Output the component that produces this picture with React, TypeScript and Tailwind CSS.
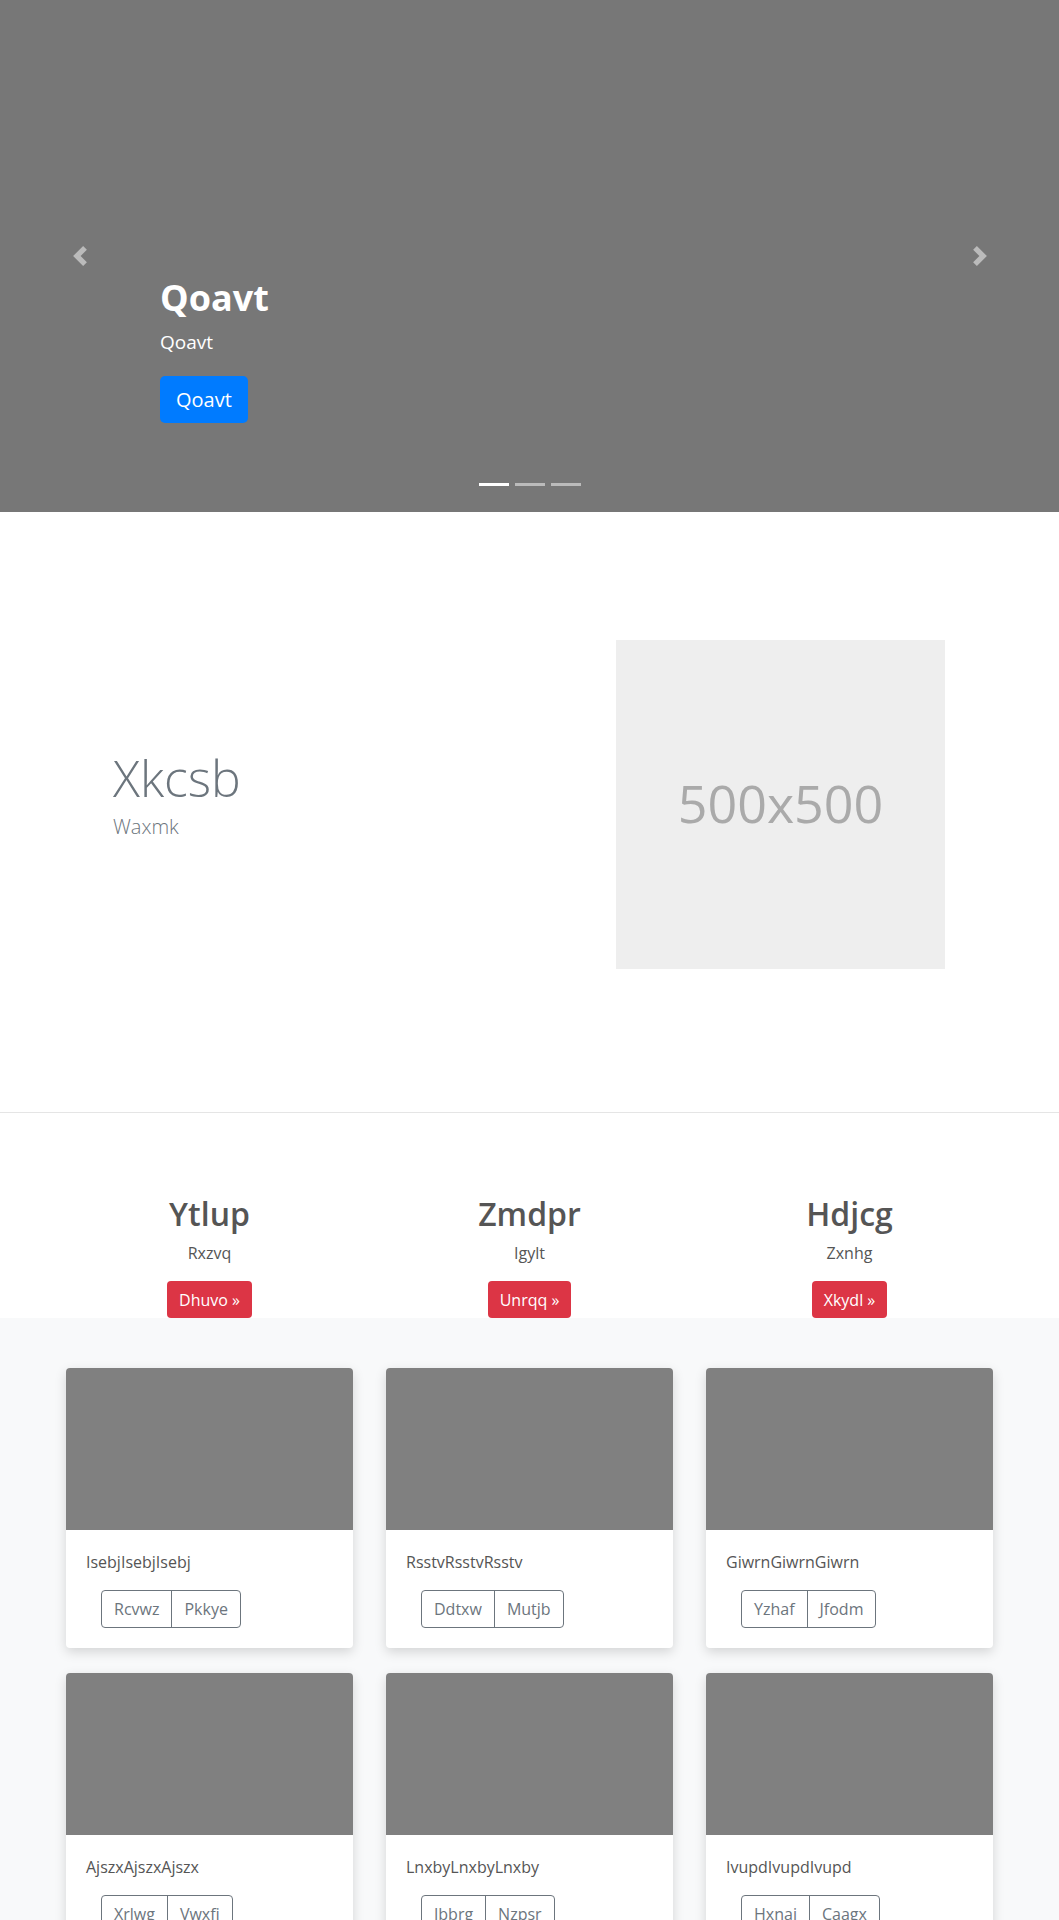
const font = { fontFamily: '"Open Sans", "Noto Sans", sans-serif' };

const features = [
  { title: 'Ytlup', text: 'Rxzvq', cta: 'Dhuvo' },
  { title: 'Zmdpr', text: 'Igylt', cta: 'Unrqq' },
  { title: 'Hdjcg', text: 'Zxnhg', cta: 'Xkydl' },
];

const cards = [
  { text: 'IsebjIsebjIsebj', a: 'Rcvwz', b: 'Pkkye' },
  { text: 'RsstvRsstvRsstv', a: 'Ddtxw', b: 'Mutjb' },
  { text: 'GiwrnGiwrnGiwrn', a: 'Yzhaf', b: 'Jfodm' },
  { text: 'AjszxAjszxAjszx', a: 'Xrlwg', b: 'Vwxfi' },
  { text: 'LnxbyLnxbyLnxby', a: 'Jbbrg', b: 'Nzpsr' },
  { text: 'IvupdIvupdIvupd', a: 'Hxnaj', b: 'Caagx' },
];

// bootstrap-style carousel arrow
const Arrow = ({ dir }: { dir: 'prev' | 'next' }) => (
  <svg width="20" height="20" viewBox="0 0 8 8" fill="#bbbbbb">
    {dir === 'prev' ? (
      <path d="M5.25 0l-4 4 4 4 1.5-1.5-2.5-2.5 2.5-2.5-1.5-1.5z" />
    ) : (
      <path d="M2.75 0l-1.5 1.5 2.5 2.5-2.5 2.5 1.5 1.5 4-4-4-4z" />
    )}
  </svg>
);

export default function App() {
  return (
    <div className="min-h-screen bg-white text-[#555]" style={font}>
      {/* Hero carousel */}
      <section className="relative h-[512px] bg-[#777] flex flex-col justify-end pl-[160px] pb-[89px]">
        <h1 className="text-[36px] leading-[1.2] font-bold text-white">Qoavt</h1>
        <p className="mt-[8px] text-[19px] leading-[30px] text-white">Qoavt</p>
        <div className="mt-[19px]">
          <button className="h-[47px] px-[16px] rounded-[5px] bg-[#007bff] text-white text-[20px] leading-[30px]">
            Qoavt
          </button>
        </div>

        <div className="absolute left-[70px] top-[246px]">
          <Arrow dir="prev" />
        </div>
        <div className="absolute left-[970px] top-[246px]">
          <Arrow dir="next" />
        </div>

        <div className="absolute left-0 right-0 bottom-[26px] flex justify-center gap-[6px]">
          <span className="block w-[30px] h-[3px] bg-white" />
          <span className="block w-[30px] h-[3px] bg-white/50" />
          <span className="block w-[30px] h-[3px] bg-white/50" />
        </div>
      </section>

      {/* Feature split */}
      <section className="border-b border-[#e5e5e5] pt-[128px] pb-[143px]">
        <div className="flex items-center">
          <div className="w-[503px] pl-[113px] pb-[20px] text-[#6c757d]">
            <h2 className="text-[50px] leading-[1.2] font-light">Xkcsb</h2>
            <p className="mt-[4px] text-[20px] leading-[30px] font-light">Waxmk</p>
          </div>
          <div className="ml-[113px] w-[329px] h-[329px] bg-[#eeeeee] flex items-center justify-center pb-[4px]">
            <span className="text-[52px] text-[#aaaaaa]">500x500</span>
          </div>
        </div>
      </section>

      {/* Three columns */}
      <section className="pt-[82px]">
        <div className="mx-auto w-[960px] grid grid-cols-3">
          {features.map((f) => (
            <div key={f.title} className="flex flex-col items-center text-center">
              <h2 className="text-[32px] leading-[1.2] font-semibold text-[#555]">{f.title}</h2>
              <p className="mt-[8px] text-[16px] leading-[24px] text-[#555]">{f.text}</p>
              <button className="mt-[16px] h-[37px] px-[12px] rounded-[4px] bg-[#dc3545] text-white text-[16px] leading-[24px]">
                {f.cta} »
              </button>
            </div>
          ))}
        </div>
      </section>

      {/* Cards */}
      <section className="bg-[#f8f9fa] pt-[50px] pb-[48px]">
        <div className="mx-auto w-[927px] grid grid-cols-3 gap-x-[33px] gap-y-[25px]">
          {cards.map((c) => (
            <div
              key={c.text}
              className="bg-white rounded-[4px] overflow-hidden shadow-[0_4px_12px_rgba(0,0,0,0.15)]"
            >
              <div className="h-[162px] bg-[#808080]" />
              <div className="p-[20px]">
                <p className="text-[16px] leading-[24px] text-[#555]">{c.text}</p>
                <div className="mt-[16px] ml-[15px] inline-flex rounded-[4px] border border-[#6c757d] text-[#6c757d]">
                  <button className="h-[36px] px-[12px] text-[16px] leading-[24px] border-r border-[#6c757d]">
                    {c.a}
                  </button>
                  <button className="h-[36px] px-[12px] text-[16px] leading-[24px]">{c.b}</button>
                </div>
              </div>
            </div>
          ))}
        </div>
      </section>
    </div>
  );
}
